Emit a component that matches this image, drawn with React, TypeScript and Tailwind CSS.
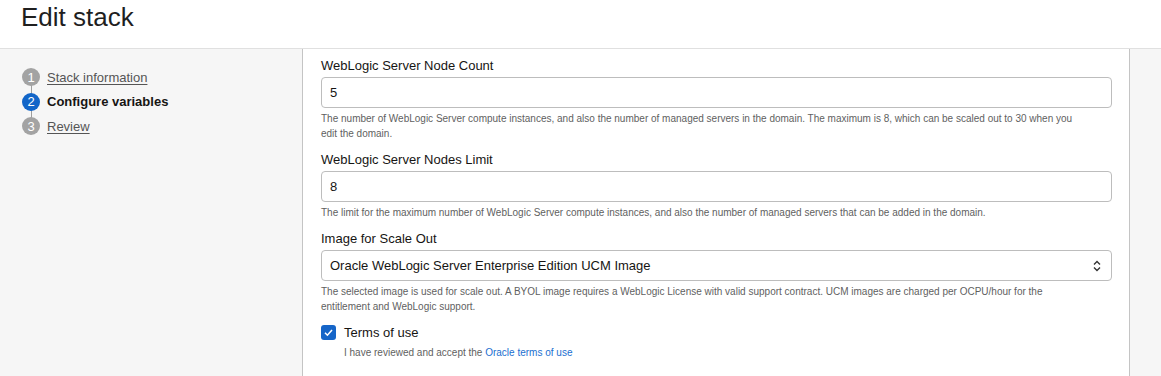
import React from 'react';

const steps = [
  { n: 1, label: 'Stack information', active: false },
  { n: 2, label: 'Configure variables', active: true },
  { n: 3, label: 'Review', active: false },
];

function Help({ children }: { children: React.ReactNode }) {
  return <p className="mt-[3px] max-w-[760px] text-[10px] leading-[15px] text-[#5f5f5f]">{children}</p>;
}

function Field({ label, value, select, help }: { label: string; value: string; select?: boolean; help: React.ReactNode }) {
  return (
    <div className="mb-[10px]">
      <div className="text-[13px] leading-[18px] text-[#161513] mb-[2px]">{label}</div>
      <div className="h-[31px] w-[791px] border border-[#bdbdbd] rounded-[4px] bg-white flex items-center justify-between px-[8px]">
        <span className="text-[13px] text-[#161513]">{value}</span>
        {select ? (
          <svg width="10" height="14" viewBox="0 0 10 14" className="mr-[1px]">
            <path d="M2 5.5 L5 2.5 L8 5.5" fill="none" stroke="#333" strokeWidth="1.4" />
            <path d="M2 8.5 L5 11.5 L8 8.5" fill="none" stroke="#333" strokeWidth="1.4" />
          </svg>
        ) : null}
      </div>
      <Help>{help}</Help>
    </div>
  );
}

export default function App() {
  return (
    <div className="w-[1161px] h-[376px] overflow-hidden flex flex-col bg-[#f6f6f6]" style={{ fontFamily: '"Liberation Sans", Arial, sans-serif' }}>
      <div className="h-[49px] shrink-0 bg-white border-b border-[#e0e0e0] px-[21px] flex items-start">
        <h1 className="text-[26px] leading-[30px] pt-[2px] text-[#1f1f1f]">Edit stack</h1>
      </div>
      <div className="flex flex-1 min-h-0">
        <div className="w-[302px] shrink-0 pl-[22px] pt-[16px]">
          <div className="relative">
            <div className="absolute left-[9px] top-[10px] h-[48px] w-[1px] bg-[#9e9e9e]" />
            {steps.map((s) => (
              <div key={s.n} className="relative flex items-center h-[24.5px]">
                <div className={`w-[18px] h-[18px] rounded-full flex items-center justify-center text-white text-[13px] ${s.active ? 'bg-[#1265c8]' : 'bg-[#a3a3a3]'}`}>
                  {s.n}
                </div>
                <span className={`ml-[7px] text-[13px] ${s.active ? 'font-bold text-[#161513]' : 'underline text-[#555] underline-offset-2'}`}>{s.label}</span>
              </div>
            ))}
          </div>
        </div>
        <div className="w-[828px] shrink-0 bg-white border-l border-r border-[#c4c4c4] pl-[18px] pt-[8px]">
          <Field
            label="WebLogic Server Node Count"
            value="5"
            help="The number of WebLogic Server compute instances, and also the number of managed servers in the domain. The maximum is 8, which can be scaled out to 30 when you edit the domain."
          />
          <Field
            label="WebLogic Server Nodes Limit"
            value="8"
            help="The limit for the maximum number of WebLogic Server compute instances, and also the number of managed servers that can be added in the domain."
          />
          <Field
            label="Image for Scale Out"
            value="Oracle WebLogic Server Enterprise Edition UCM Image"
            select
            help="The selected image is used for scale out. A BYOL image requires a WebLogic License with valid support contract. UCM images are charged per OCPU/hour for the entitlement and WebLogic support."
          />
          <div className="flex items-start">
            <div className="w-[15px] h-[15px] mt-[1px] rounded-[3px] bg-[#1565c8] flex items-center justify-center">
              <svg width="11" height="11" viewBox="0 0 11 11">
                <path d="M2 5.8 L4.4 8.2 L9 3" fill="none" stroke="white" strokeWidth="1.6" />
              </svg>
            </div>
            <div className="ml-[8px]">
              <div className="text-[13px] leading-[17px] text-[#161513]">Terms of use</div>
              <div className="mt-[4px] text-[10px] leading-[15px] text-[#5f5f5f]">
                I have reviewed and accept the <span className="text-[#1a6fd0]">Oracle terms of use</span>
              </div>
            </div>
          </div>
        </div>
        <div className="flex-1" />
      </div>
    </div>
  );
}
